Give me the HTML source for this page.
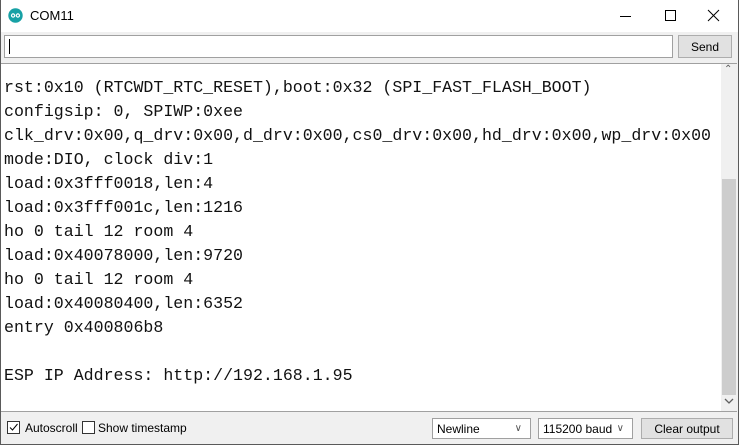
<!DOCTYPE html>
<html><head><meta charset="utf-8"><style>
*{margin:0;padding:0;box-sizing:border-box}
body{width:739px;height:445px;overflow:hidden;background:#f0f0f0;font-family:"Liberation Sans",sans-serif;position:relative}
.abs{position:absolute}
#title{left:0;top:0;width:739px;height:32px;background:#fff}
#frame{left:0;top:0;width:739px;height:445px;border-left:1px solid #5a5a5a;border-right:1px solid #5a5a5a;border-bottom:1px solid #5a5a5a;pointer-events:none}
#out{left:1px;top:63px;width:736px;height:349px;background:#fff;border-top:1px solid #a0a0a0;border-bottom:1px solid #a0a0a0}
pre{position:absolute;left:4px;top:76px;font-family:"Liberation Mono",monospace;font-size:16.6px;line-height:24px;color:#111}
.btn{background:#e1e1e1;border:1px solid #adadad;font-size:12px;display:flex;align-items:center;justify-content:center;color:#000}
.sel{background:#fff;border:1px solid #a0a0a0;font-size:12px;padding-left:4px;display:flex;align-items:center;color:#000}
.sel span.c{position:absolute;right:8px;top:4px;font-size:10px;color:#555}
.cb{width:13px;height:13px;border:1px solid #333;background:#fff}
</style></head><body>
<div class="abs" id="title"></div>
<svg class="abs" style="left:8px;top:8px" width="15" height="15" viewBox="0 0 15 15"><circle cx="7.5" cy="7.5" r="7.2" fill="#17a1a5"/><path d="M3.5 7.5a1.6 1.6 0 1 0 3.2 0a1.6 1.6 0 1 0-3.2 0M8.3 7.5a1.6 1.6 0 1 0 3.2 0a1.6 1.6 0 1 0-3.2 0" fill="none" stroke="#fff" stroke-width="1.2"/></svg>
<div class="abs" style="left:30px;top:8px;font-size:13px;color:#000">COM11</div>
<svg class="abs" style="left:620px;top:8px" width="110" height="16"><line x1="0" y1="8.5" x2="11" y2="8.5" stroke="#000"/><rect x="45.5" y="2.5" width="10" height="10" fill="none" stroke="#000"/><path d="M88 2l11 11M99 2l-11 11" stroke="#000"/></svg>
<div class="abs" style="left:4px;top:35px;width:669px;height:23px;background:#fff;border:1px solid #a0a0a0"></div>
<div class="abs" style="left:9px;top:39px;width:1px;height:15px;background:#000"></div>
<div class="abs btn" style="left:678px;top:35px;width:54px;height:23px">Send</div>
<div class="abs" id="out"></div>
<pre>rst:0x10 (RTCWDT_RTC_RESET),boot:0x32 (SPI_FAST_FLASH_BOOT)
configsip: 0, SPIWP:0xee
clk_drv:0x00,q_drv:0x00,d_drv:0x00,cs0_drv:0x00,hd_drv:0x00,wp_drv:0x00
mode:DIO, clock div:1
load:0x3fff0018,len:4
load:0x3fff001c,len:1216
ho 0 tail 12 room 4
load:0x40078000,len:9720
ho 0 tail 12 room 4
load:0x40080400,len:6352
entry 0x400806b8

ESP IP Address: http://192.168.1.95</pre>
<div class="abs" style="left:721px;top:64px;width:16px;height:347px;background:#f0f0f0"></div>
<div class="abs" style="left:722px;top:179px;width:14px;height:216px;background:#cdcdcd"></div>
<div class="abs" style="left:724px;top:64px;font-size:10px;color:#606060">&#8963;</div>
<svg class="abs" style="left:724px;top:398px" width="10" height="8"><path d="M1 1l4 4 4-4" fill="none" stroke="#606060" stroke-width="1.3"/></svg>
<div class="abs cb" style="left:7px;top:421px"></div>
<svg class="abs" style="left:8px;top:422px" width="11" height="11"><path d="M2 5.5l2.5 2.5 5-6" fill="none" stroke="#000" stroke-width="1"/></svg>
<div class="abs" style="left:25px;top:421px;font-size:12px">Autoscroll</div>
<div class="abs cb" style="left:82px;top:421px"></div>
<div class="abs" style="left:98px;top:421px;font-size:12px">Show timestamp</div>
<div class="abs sel" style="left:432px;top:418px;width:99px;height:21px">Newline<span class="c">&#8744;</span></div>
<div class="abs sel" style="left:538px;top:418px;width:95px;height:21px">115200 baud<span class="c">&#8744;</span></div>
<div class="abs btn" style="left:641px;top:418px;width:92px;height:21px">Clear output</div>
<div class="abs" id="frame"></div>
</body></html>
